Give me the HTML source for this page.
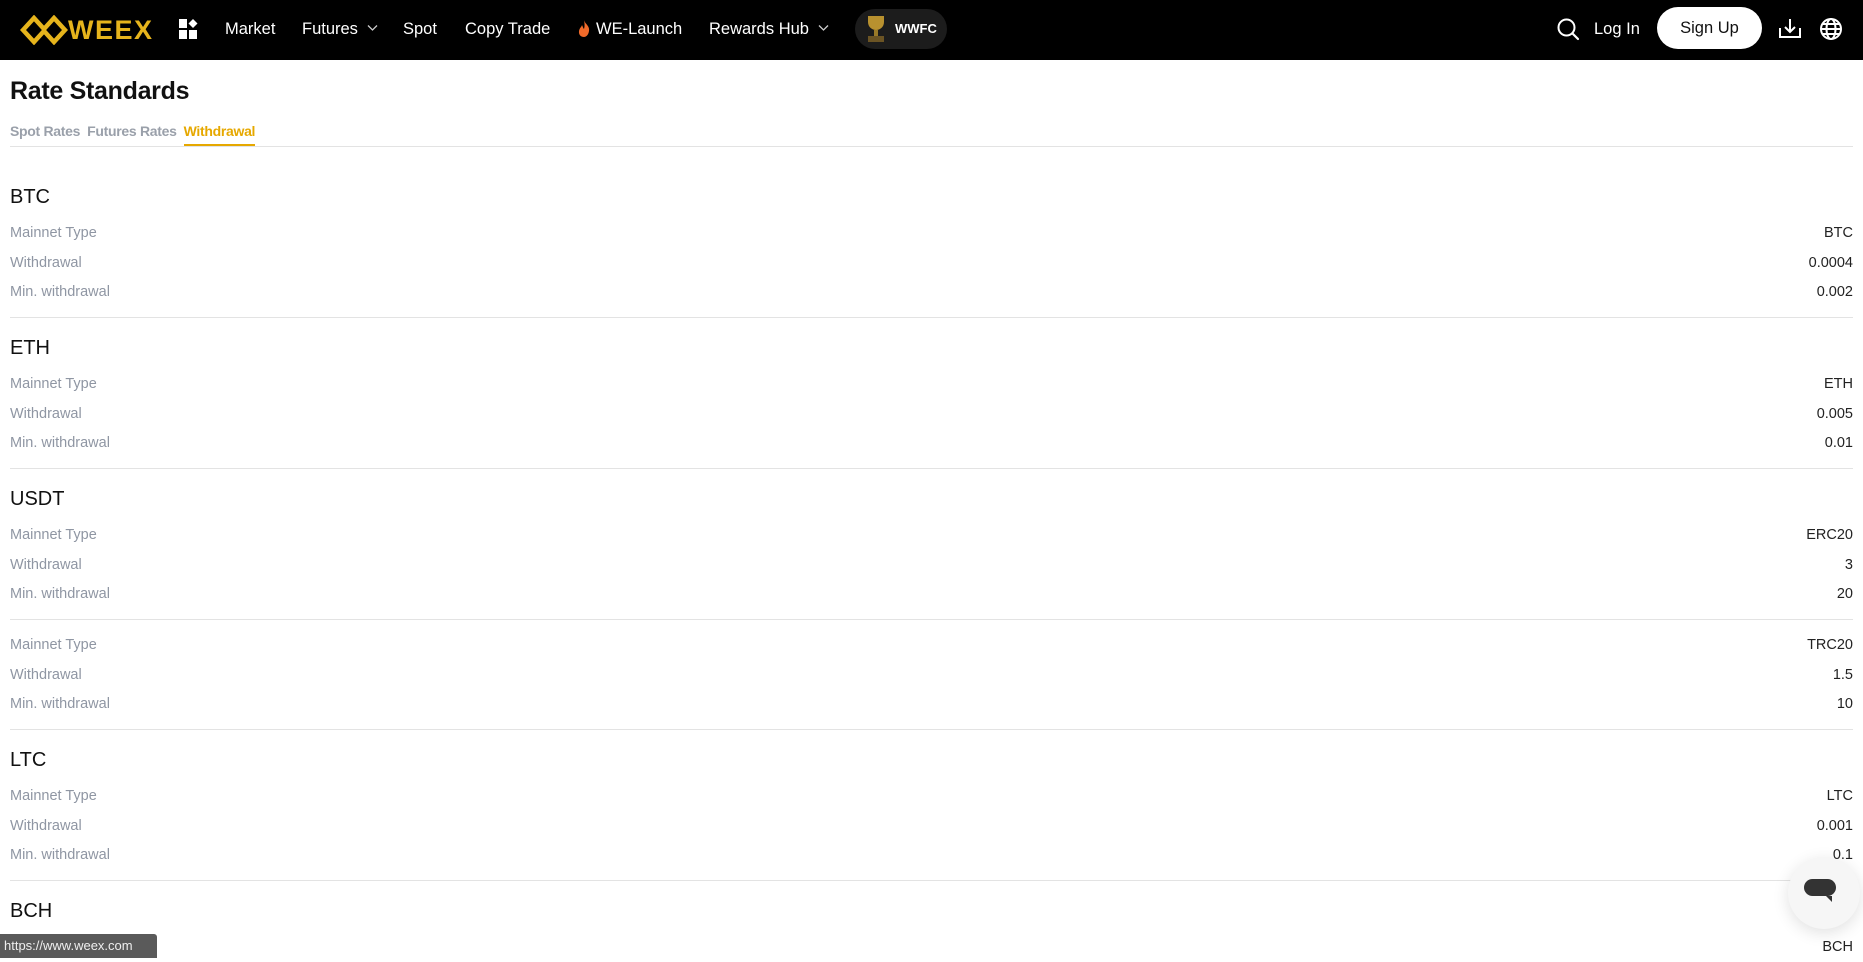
<!DOCTYPE html>
<html><head><meta charset="utf-8"><style>
*{margin:0;padding:0;box-sizing:border-box}
body{width:1863px;height:958px;overflow:hidden;background:#fff;font-family:"Liberation Sans",sans-serif;position:relative}
.hdr{position:absolute;left:0;top:0;width:1863px;height:60px;background:#000;color:#fff}
.hdr .t{position:absolute;top:18px;font-size:16.5px;line-height:22px;white-space:nowrap}
.logo{position:absolute;left:20px;top:15px}
.logotxt{position:absolute;left:68px;top:14px;font-size:27px;line-height:32px;font-weight:bold;color:#e6b41c;letter-spacing:1.5px}
.chev{position:absolute;top:24px}
.pill{position:absolute;left:855px;top:9px;width:92px;height:40px;border-radius:20px;background:#1c1c1c}
.pill span{position:absolute;left:40px;top:12px;font-size:13px;font-weight:bold}
.signup{position:absolute;left:1657px;top:7px;width:105px;height:42px;border-radius:21px;background:#fff;color:#111;font-size:16.5px;text-align:center;line-height:42px}
h1{position:absolute;left:10px;top:77px;font-size:25px;font-weight:bold;color:#111;letter-spacing:-0.3px}
.tabs{position:absolute;left:10px;top:123px;font-size:14px;color:#9aa0aa;font-weight:bold;letter-spacing:-0.3px}
.tabs span{margin-right:7px}
.tabs .on{color:#e6a800;display:inline-block;border-bottom:2px solid #e6a800;height:23px}
.tline{position:absolute;left:10px;top:146px;width:1843px;height:1px;background:#e3e3e3}
.sec{position:absolute;left:10px;width:1843px}
.sec .ti{position:absolute;left:0;font-size:20px;color:#111;line-height:30px}
.row{position:absolute;left:0;width:1843px;height:30px;line-height:30px;font-size:14.5px}
.row .l{color:#8f96a3}
.row .v{position:absolute;right:0;top:0;color:#222}
.dv{position:absolute;left:10px;width:1843px;height:1px;background:#e3e3e3}
.status{position:absolute;left:0;top:934px;width:157px;height:24px;background:#5a5a5a;color:#eee;font-size:13px;line-height:24px;padding-left:4px;border-top-right-radius:3px}
.chat{position:absolute;left:1788px;top:857px;width:72px;height:72px;border-radius:50%;background:#f6f6f6;box-shadow:0 4px 16px rgba(0,0,0,.12)}
</style></head><body>
<div class="hdr">
 <svg class="logo" width="48" height="30" viewBox="0 0 48 30"><g fill="none" stroke="#e6b41c" stroke-width="4.5" stroke-linejoin="miter"><path d="M14 3 L3 15 L14 27 L24 16 L34 27 L45 15 L34 3 L24 14 Z"/></g></svg>
 <div class="logotxt">WEEX</div>
 <svg style="position:absolute;left:179px;top:19px" width="19" height="20" viewBox="0 0 19 20"><rect x="0" y="0" width="8" height="9" fill="#fff"/><rect x="0" y="11" width="8" height="9" fill="#fff"/><rect x="10" y="11" width="8" height="9" fill="#fff"/><path d="M14 0 L18.5 4.5 L14 9 L9.5 4.5Z" fill="#fff"/></svg>
 <div class="t" style="left:225px">Market</div>
 <div class="t" style="left:302px">Futures</div>
 <svg class="chev" style="left:367px" width="11" height="8" viewBox="0 0 11 8"><path d="M1 1.5 L5.5 6 L10 1.5" fill="none" stroke="#ccc" stroke-width="1.3"/></svg>
 <div class="t" style="left:403px">Spot</div>
 <div class="t" style="left:465px">Copy Trade</div>
 <svg style="position:absolute;left:578px;top:20px" width="12" height="17" viewBox="0 0 12 17"><path d="M6 0 C7 4 12 6 11 11 C10.5 15 8 17 6 17 C3 17 0.5 15 1 11 C1.5 8 3.5 7 4 5 C5 7 5 8 6 9 C7 6 6.5 3 6 0Z" fill="#f06a2a"/></svg>
 <div class="t" style="left:596px">WE-Launch</div>
 <div class="t" style="left:709px">Rewards Hub</div>
 <svg class="chev" style="left:818px" width="11" height="8" viewBox="0 0 11 8"><path d="M1 1.5 L5.5 6 L10 1.5" fill="none" stroke="#ccc" stroke-width="1.3"/></svg>
 <div class="pill"><svg style="position:absolute;left:6px;top:4px" width="30" height="32" viewBox="0 0 30 32"><path d="M7 3 H23 V9 C23 14 19 17 15 17 C11 17 7 14 7 9Z" fill="#b8912f"/><rect x="13" y="17" width="4" height="6" fill="#9a7a28"/><rect x="7" y="23" width="16" height="6" fill="#6b5424"/></svg><span>WWFC</span></div>
 <svg style="position:absolute;left:1556px;top:17px" width="24" height="24" viewBox="0 0 24 24"><circle cx="10.5" cy="10.5" r="8" fill="none" stroke="#fff" stroke-width="2"/><path d="M16.5 16.5 L22 22" stroke="#fff" stroke-width="2.2" stroke-linecap="round"/></svg>
 <div class="t" style="left:1594px">Log In</div>
 <div class="signup">Sign Up</div>
 <svg style="position:absolute;left:1779px;top:17px" width="22" height="22" viewBox="0 0 22 22"><path d="M1 11 V20 H21 V11" fill="none" stroke="#fff" stroke-width="2"/><path d="M11 2 V15 M6 10 L11 15 L16 10" fill="none" stroke="#fff" stroke-width="2"/></svg>
 <svg style="position:absolute;left:1819px;top:17px" width="24" height="24" viewBox="0 0 24 24"><g fill="none" stroke="#fff" stroke-width="2"><circle cx="12" cy="12" r="10"/><ellipse cx="12" cy="12" rx="4.5" ry="10"/><path d="M2 12 H22 M4 7 H20 M4 17 H20"/></g></svg>
</div>
<h1>Rate Standards</h1>
<div class="tabs"><span>Spot Rates</span><span>Futures Rates</span><span class="on">Withdrawal</span></div>
<div class="tline"></div>

<div class="sec" style="top:182px"><div class="ti" style="top:0">BTC</div>
 <div class="row" style="top:36px"><span class="l">Mainnet Type</span><span class="v">BTC</span></div>
 <div class="row" style="top:65.7px"><span class="l">Withdrawal</span><span class="v">0.0004</span></div>
 <div class="row" style="top:95.4px"><span class="l">Min. withdrawal</span><span class="v">0.002</span></div></div>
<div class="dv" style="top:317px"></div>

<div class="sec" style="top:333px"><div class="ti" style="top:0">ETH</div>
 <div class="row" style="top:36px"><span class="l">Mainnet Type</span><span class="v">ETH</span></div>
 <div class="row" style="top:65.7px"><span class="l">Withdrawal</span><span class="v">0.005</span></div>
 <div class="row" style="top:95.4px"><span class="l">Min. withdrawal</span><span class="v">0.01</span></div></div>
<div class="dv" style="top:468px"></div>

<div class="sec" style="top:484px"><div class="ti" style="top:0">USDT</div>
 <div class="row" style="top:36px"><span class="l">Mainnet Type</span><span class="v">ERC20</span></div>
 <div class="row" style="top:65.7px"><span class="l">Withdrawal</span><span class="v">3</span></div>
 <div class="row" style="top:95.4px"><span class="l">Min. withdrawal</span><span class="v">20</span></div></div>
<div class="dv" style="top:619px"></div>

<div class="sec" style="top:630px">
 <div class="row" style="top:0"><span class="l">Mainnet Type</span><span class="v">TRC20</span></div>
 <div class="row" style="top:29.7px"><span class="l">Withdrawal</span><span class="v">1.5</span></div>
 <div class="row" style="top:59.4px"><span class="l">Min. withdrawal</span><span class="v">10</span></div></div>
<div class="dv" style="top:729px"></div>

<div class="sec" style="top:745px"><div class="ti" style="top:0">LTC</div>
 <div class="row" style="top:36px"><span class="l">Mainnet Type</span><span class="v">LTC</span></div>
 <div class="row" style="top:65.7px"><span class="l">Withdrawal</span><span class="v">0.001</span></div>
 <div class="row" style="top:95.4px"><span class="l">Min. withdrawal</span><span class="v">0.1</span></div></div>
<div class="dv" style="top:880px"></div>

<div class="sec" style="top:896px"><div class="ti" style="top:0">BCH</div>
 <div class="row" style="top:36px"><span class="l">Mainnet Type</span><span class="v">BCH</span></div></div>

<div class="chat"><svg style="position:absolute;left:15px;top:21px" width="34" height="28" viewBox="0 0 34 28"><rect x="1" y="1" width="32" height="17" rx="8.5" fill="#333"/><path d="M23 18 L29 18 L29 24Z" fill="#333"/></svg></div>
<div class="status">https://www.weex.com</div>
</body></html>
